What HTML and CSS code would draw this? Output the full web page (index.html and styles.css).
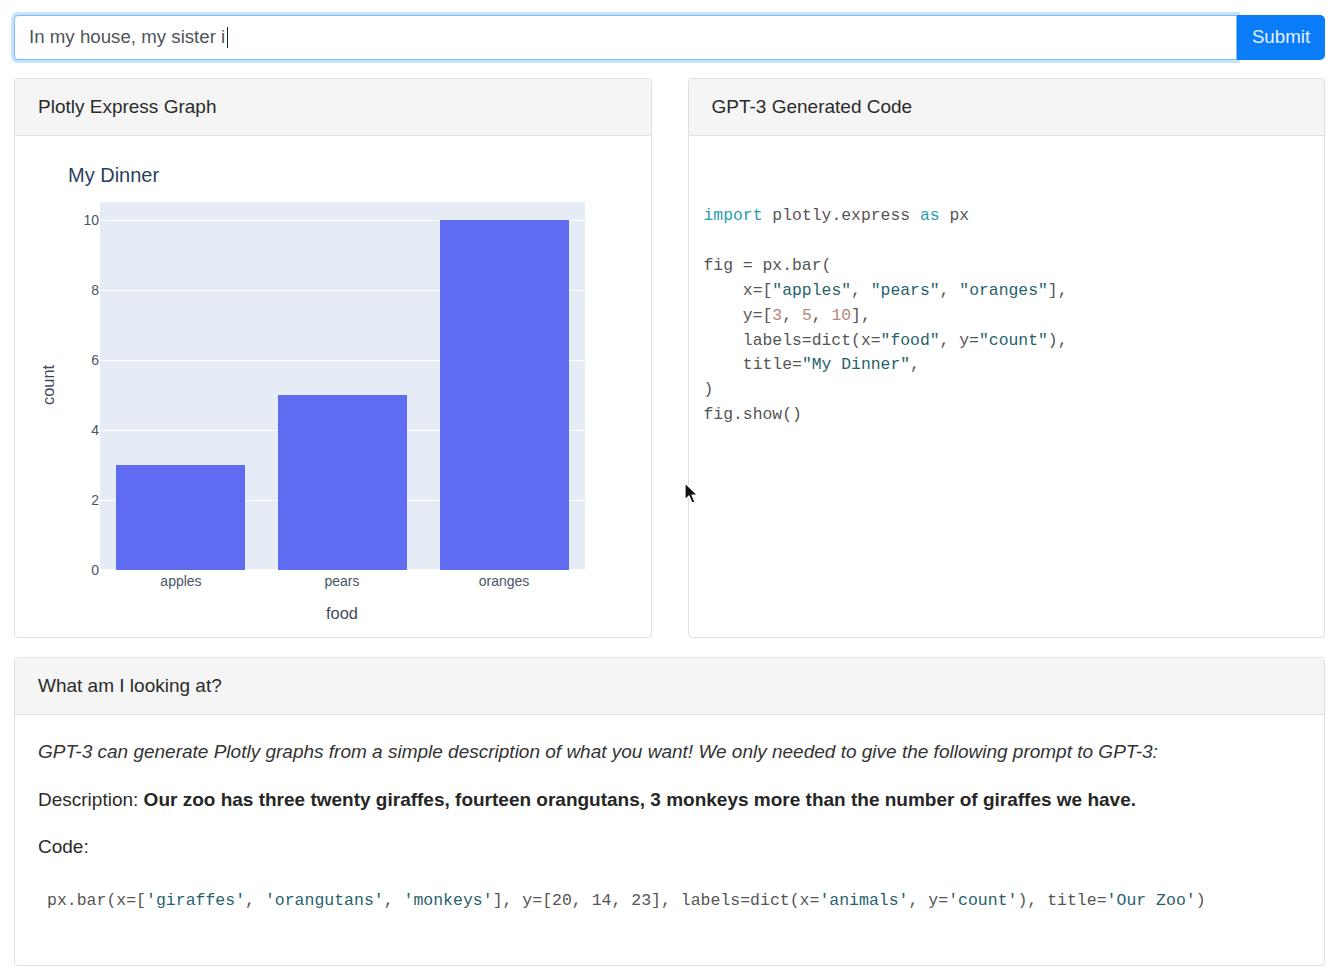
FILE: index.html
```html
<!DOCTYPE html>
<html lang="en">
<head>
<meta charset="utf-8">
<title>GPT-3 Plotly</title>
<link rel="stylesheet" href="styles.css">
</head>
<body>
<div class="page">
  <form class="search">
    <div class="input"><span class="typed">In my house, my sister i</span><span class="caret"></span></div>
    <button type="button" class="btn">Submit</button>
  </form>

  <div class="row">
    <section class="card tall">
      <div class="card-header">Plotly Express Graph</div>
      <div class="chart-body">
        <svg class="chart" width="635" height="500" viewBox="0 0 635 500">
          <rect x="85" y="66" width="485" height="368" fill="#e5ecf6"/>
          <g stroke="#ffffff" stroke-width="1">
            <line x1="85" y1="84.5" x2="570" y2="84.5"/>
            <line x1="85" y1="154.5" x2="570" y2="154.5"/>
            <line x1="85" y1="224.5" x2="570" y2="224.5"/>
            <line x1="85" y1="294.5" x2="570" y2="294.5"/>
            <line x1="85" y1="364.5" x2="570" y2="364.5"/>
          </g>
          <line x1="85" y1="434" x2="570" y2="434" stroke="#ffffff" stroke-width="2"/>
          <g fill="#5f6cf2">
            <rect x="101" y="329" width="129" height="105"/>
            <rect x="263" y="259" width="129" height="175"/>
            <rect x="425" y="84" width="129" height="350"/>
          </g>
          <g class="tick" text-anchor="end">
            <text x="84" y="89">10</text>
            <text x="84" y="159">8</text>
            <text x="84" y="229">6</text>
            <text x="84" y="299">4</text>
            <text x="84" y="369">2</text>
            <text x="84" y="439">0</text>
          </g>
          <g class="tick" text-anchor="middle">
            <text x="166" y="450">apples</text>
            <text x="327" y="450">pears</text>
            <text x="489" y="450">oranges</text>
          </g>
          <text class="axis-title" x="327" y="483" text-anchor="middle">food</text>
          <text class="axis-title" x="0" y="0" text-anchor="middle" transform="translate(39 249) rotate(-90)">count</text>
          <text class="chart-title" x="53" y="46">My Dinner</text>
        </svg>
      </div>
    </section>

    <section class="card tall">
      <div class="card-header">GPT-3 Generated Code</div>
      <div class="code-body">
<pre class="code"><span class="kw">import</span> plotly.express <span class="kw">as</span> px

fig = px.bar(
    x=[<span class="str">"apples"</span>, <span class="str">"pears"</span>, <span class="str">"oranges"</span>],
    y=[<span class="num">3</span>, <span class="num">5</span>, <span class="num">10</span>],
    labels=dict(x=<span class="str">"food"</span>, y=<span class="str">"count"</span>),
    title=<span class="str">"My Dinner"</span>,
)
fig.show()</pre>
      </div>
    </section>
  </div>

  <section class="card wide">
    <div class="card-header">What am I looking at?</div>
    <div class="card-body">
      <p><em>GPT-3 can generate Plotly graphs from a simple description of what you want! We only needed to give the following prompt to GPT-3:</em></p>
      <p>Description: <strong>Our zoo has three twenty giraffes, fourteen orangutans, 3 monkeys more than the number of giraffes we have.</strong></p>
      <p>Code:</p>
      <pre class="code inline-code">px.bar(x=[<span class="str">'giraffes'</span>, <span class="str">'orangutans'</span>, <span class="str">'monkeys'</span>], y=[20, 14, 23], labels=dict(x=<span class="str">'animals'</span>, y=<span class="str">'count'</span>), title=<span class="str">'Our Zoo'</span>)</pre>
    </div>
  </section>
</div>

<svg class="pointer" width="16" height="24" viewBox="0 0 16 24">
  <path d="M1 1 L1 18 L5 14 L8 21 L11 20 L8 13 L13.5 13 Z" fill="#111" stroke="#fff" stroke-width="1.2" stroke-linejoin="round"/>
</svg>
</body>
</html>
```

FILE: styles.css
```css
* { box-sizing: border-box; }

html, body {
  margin: 0;
  padding: 0;
}

body {
  font-family: "Liberation Sans", Arial, sans-serif;
  font-size: 19px;
  line-height: 1.5;
  color: #2b2b2b;
  background: #ffffff;
  position: relative;
}

.page {
  padding: 15px 17px 0 14px;
}

.search {
  display: flex;
  height: 45px;
  margin: 0;
}

.input {
  flex: 1;
  display: flex;
  align-items: center;
  padding: 0 14px;
  border: 1px solid #80bdff;
  border-radius: 4px 0 0 4px;
  box-shadow: 0 0 0 3px rgba(0, 123, 255, 0.22);
  color: #4f5459;
  background: #fff;
  font-size: 18.7px;
}

.caret {
  display: inline-block;
  width: 1px;
  height: 21px;
  margin-left: 2px;
  background: #222;
}

.btn {
  width: 88px;
  border: none;
  border-radius: 0 5px 5px 0;
  background: #0a7cf7;
  color: #e4f1ff;
  font: inherit;
  font-size: 18.7px;
  padding: 0;
}

.row {
  display: grid;
  grid-template-columns: 1fr 1fr;
  gap: 36px;
  margin-top: 18px;
}

.card {
  display: flex;
  flex-direction: column;
  border: 1px solid #e0e0e0;
  border-radius: 4px;
  background: #fff;
  overflow: hidden;
}

.tall { height: 560px; }

.wide {
  margin-top: 19px;
  height: 309px;
}

.card-header {
  height: 57px;
  padding: 14px 23px 12px 23px;
  background: #f5f5f5;
  border-bottom: 1px solid #e2e2e2;
  color: #2b2b2b;
}

.chart-body {
  flex: 1;
}

.chart {
  display: block;
}

.tick {
  font-family: "Liberation Sans", Arial, sans-serif;
  font-size: 14px;
  fill: #4a5568;
}

.axis-title {
  font-family: "Liberation Sans", Arial, sans-serif;
  font-size: 16.4px;
  fill: #3d4a5e;
}

.chart-title {
  font-family: "Liberation Sans", Arial, sans-serif;
  font-size: 20px;
  fill: #2a3f5f;
}

.code-body {
  flex: 1;
  padding: 68px 15px 0 15px;
}

.code {
  margin: 0;
  font-family: "Liberation Mono", "DejaVu Sans Mono", monospace;
  font-size: 16.4px;
  line-height: 24.9px;
  color: #555;
  white-space: pre;
}

.kw { color: #2a9db0; }
.str { color: #26616c; }
.num { color: #b3877d; }

.card-body {
  flex: 1;
  padding: 23px 23px 0 23px;
}

.card-body p {
  margin: 0 0 19px 0;
}

.card-body em {
  color: #333;
}

.card-body strong {
  color: #262626;
}

.inline-code {
  padding: 8px 9px;
  font-size: 16.5px;
  line-height: 24px;
}

.pointer {
  position: absolute;
  left: 684px;
  top: 482px;
}
```
